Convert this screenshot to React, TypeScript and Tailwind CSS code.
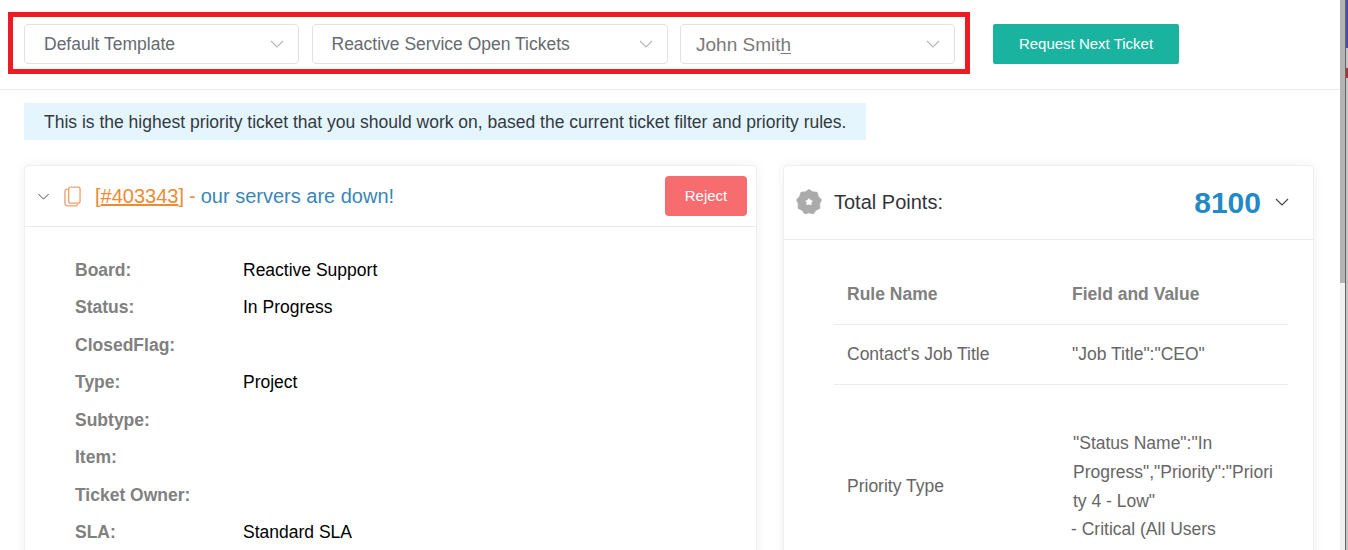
import React from "react";

function Chevron({ className = "" }: { className?: string }) {
  return (
    <svg viewBox="0 0 14 8" className={className} fill="none" stroke="currentColor" strokeWidth="1.1">
      <path d="M1 1l6 6 6-6" />
    </svg>
  );
}

function Select({ label, width, extra = "" }: { label: React.ReactNode; width: string; extra?: string }) {
  return (
    <div className={`${width} h-10 flex items-center justify-between bg-white border border-[#e2e2e2] rounded-[4px] shrink-0`}>
      <span className={extra}>{label}</span>
      <Chevron className="w-[14px] h-2 mr-[14px] text-[#b5b5b5]" />
    </div>
  );
}

const rows: [string, string, string][] = [
  ["Board:", "Reactive Support", "h-[37px]"],
  ["Status:", "In Progress", "h-[38px]"],
  ["ClosedFlag:", "", "h-[37px]"],
  ["Type:", "Project", "h-[38px]"],
  ["Subtype:", "", "h-[37px]"],
  ["Item:", "", "h-[38px]"],
  ["Ticket Owner:", "", "h-[37px]"],
  ["SLA:", "Standard SLA", "h-[38px]"],
];

const burst = Array.from({ length: 18 }, (_, i) => {
  const r = i % 2 === 0 ? 12.6 : 10.8;
  const a = (i * Math.PI) / 9 - Math.PI / 2;
  return `${(13 + r * Math.cos(a)).toFixed(2)},${(13 + r * Math.sin(a)).toFixed(2)}`;
}).join(" ");

const hole = Array.from({ length: 10 }, (_, i) => {
  const r = i % 2 === 0 ? 4 : 2.6;
  const a = (i * Math.PI) / 5 - Math.PI / 2;
  return `${(13 + r * Math.cos(a)).toFixed(2)},${(13 + r * Math.sin(a)).toFixed(2)}`;
}).join(" ");

export default function App() {
  return (
    <div className="w-[1348px] h-[550px] overflow-hidden bg-white flex font-['Liberation_Sans',Arial,sans-serif] text-[17.5px]">
      <div className="w-[1340px] shrink-0">
        <header className="h-[90px] border-b border-[#ebebeb] pl-2 pt-3 flex items-start">
          <div className="w-[962px] h-[62px] border-[5px] border-[#ed1c24] pl-[11px] pt-[7px] flex gap-[13px]">
            <Select width="w-[275px]" extra="pl-[19px] text-[#666a70]" label="Default Template" />
            <Select width="w-[356px]" extra="pl-[18.5px] text-[#666a70]" label="Reactive Service Open Tickets" />
            <div className="-ml-px">
              <Select
                width="w-[275px]"
                extra="pl-[15px] pt-0.5 text-[19px] text-[#7a7a7a]"
                label={<>John Smit<span className="underline underline-offset-2">h</span></>}
              />
            </div>
          </div>
          <button className="ml-[23px] mt-3 w-[186px] h-10 bg-[#1ab39f] rounded-[2px] text-white text-[15px]">
            Request Next Ticket
          </button>
        </header>

        <div className="pl-6 pt-[13px]">
          <div className="w-[842px] h-[37px] bg-[#e5f5fe] pl-5 pt-px flex items-center text-[#333a40]">
            This is the highest priority ticket that you should work on, based the current ticket filter and priority rules.
          </div>

          <div className="flex items-start mt-[25px] gap-[26px]">
            <section className="w-[733px] h-[500px] shrink-0 rounded-[4px] bg-white border border-[#f0f0f0] shadow-[0_0_12px_rgba(0,0,0,0.06)]">
              <div className="h-[61px] border-b border-[#ebebeb] flex items-center pl-3 pr-[9px]">
                <Chevron className="w-[13px] h-[7px] text-[#3c4650] shrink-0" />
                <svg viewBox="0 0 18 22" className="ml-[14px] w-[17px] h-[21px] shrink-0" fill="none" stroke="#f0a070" strokeWidth="1.4">
                  <rect x="5" y="1" width="12" height="17" rx="2" />
                  <path d="M5 3.5H3a2 2 0 0 0-2 2V18a3 3 0 0 0 3 3h8a2 2 0 0 0 2-2" />
                </svg>
                <span className="ml-[14px] text-[20px] text-[#ee8a32]">
                  [<span className="underline">#403343</span>]
                </span>
                <span className="ml-[5px] text-[20px] text-[#ee8a32]">-</span>
                <span className="ml-[5px] text-[20px] text-[#3a86b7]">our servers are down!</span>
                <button className="ml-auto w-[82px] h-10 bg-[#f76c6f] rounded-[4px] text-white text-[15px]">Reject</button>
              </div>
              <div className="pt-[24.5px] pl-[50px]">
                {rows.map(([k, v, h]) => (
                  <div key={k} className={`${h} flex items-center`}>
                    <span className="w-[168px] font-bold text-[#808080]">{k}</span>
                    <span className="text-black">{v}</span>
                  </div>
                ))}
              </div>
            </section>

            <section className="w-[531px] h-[500px] shrink-0 rounded-[4px] bg-white border border-[#f0f0f0] shadow-[0_0_12px_rgba(0,0,0,0.06)]">
              <div className="h-[74px] border-b border-[#ebebeb] flex items-center pl-3 pr-[23px] pb-0.5">
                <svg viewBox="0 0 26 26" className="w-[26px] h-[26px] shrink-0">
                  <polygon fill="#ababab" stroke="#ababab" strokeWidth="0.8" strokeLinejoin="round" points={burst} />
                  <polygon fill="#fff" points={hole} />
                </svg>
                <span className="ml-3 text-[20px] text-[#30343a]">Total Points:</span>
                <span className="ml-auto pt-0.5 text-[30px] font-bold text-[#2389c4]">8100</span>
                <Chevron className="ml-[14px] mr-px w-[14px] h-2 text-[#3c4650]" />
              </div>
              <div className="ml-[50px] mr-[25px] text-[#666]">
                <div className="h-[85px] border-b border-[#ebebeb] flex items-end pb-[17px] pl-px font-bold text-[#808080]">
                  <span className="ml-3 w-[225px]">Rule Name</span>
                  <span>Field and Value</span>
                </div>
                <div className="h-[60px] border-b border-[#ebebeb] flex items-center pb-px pl-px">
                  <span className="ml-3 w-[225px]">Contact's Job Title</span>
                  <span>"Job Title":"CEO"</span>
                </div>
                <div className="flex pt-[44px] pl-px">
                  <span className="ml-3 w-[225px] pt-[44px]">Priority Type</span>
                  <div className="w-[204px]">
                    <div className="leading-[29px] pl-px">
                      "Status Name":"In<br />Progress","Priority":"Priori<br />ty 4 - Low"
                    </div>
                    <div className="leading-[26px] -ml-px">- Critical (All Users</div>
                  </div>
                </div>
              </div>
            </section>
          </div>
        </div>
      </div>

      <div className="w-[5px] h-full bg-[#f0f0f0] shrink-0">
        <div className="h-[283px] bg-[#b4b4b4]" />
      </div>
      <div className="w-[3px] h-full bg-[#c4c4c4] border-l border-[#666] shrink-0">
        <div className="h-12 bg-[#4c4fa8]" />
        <div className="h-5" />
        <div className="h-2.5 bg-[#b0303a]" />
      </div>
    </div>
  );
}
